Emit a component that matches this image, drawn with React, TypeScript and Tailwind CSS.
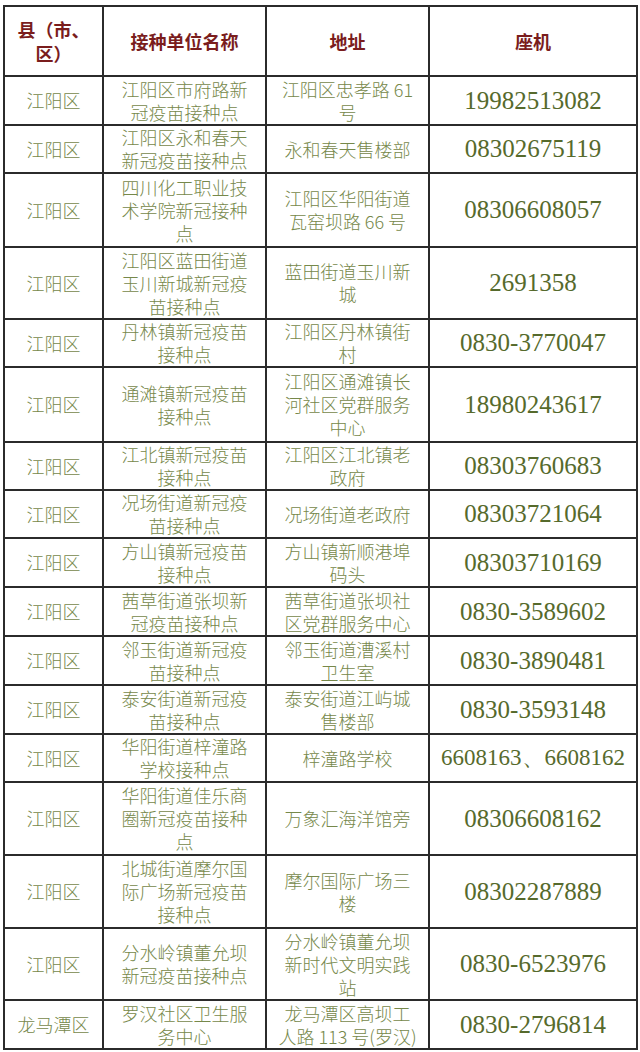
import React from 'react'

type Row = {
  h: string
  county: string
  site: string[]
  address: string[]
  phone: string
}

const ROWS: Row[] = [
  { h: 'h-[49px]', county: '江阳区', site: ['江阳区市府路新', '冠疫苗接种点'], address: ['江阳区忠孝路 61', '号'], phone: '19982513082' },
  { h: 'h-[48px]', county: '江阳区', site: ['江阳区永和春天', '新冠疫苗接种点'], address: ['永和春天售楼部'], phone: '08302675119' },
  { h: 'h-[74px]', county: '江阳区', site: ['四川化工职业技', '术学院新冠接种', '点'], address: ['江阳区华阳街道', '瓦窑坝路 66 号'], phone: '08306608057' },
  { h: 'h-[72px]', county: '江阳区', site: ['江阳区蓝田街道', '玉川新城新冠疫', '苗接种点'], address: ['蓝田街道玉川新', '城'], phone: '2691358' },
  { h: 'h-[48px]', county: '江阳区', site: ['丹林镇新冠疫苗', '接种点'], address: ['江阳区丹林镇街', '村'], phone: '0830-3770047' },
  { h: 'h-[75px]', county: '江阳区', site: ['通滩镇新冠疫苗', '接种点'], address: ['江阳区通滩镇长', '河社区党群服务', '中心'], phone: '18980243617' },
  { h: 'h-[47px]', county: '江阳区', site: ['江北镇新冠疫苗', '接种点'], address: ['江阳区江北镇老', '政府'], phone: '08303760683' },
  { h: 'h-[47px]', county: '江阳区', site: ['况场街道新冠疫', '苗接种点'], address: ['况场街道老政府'], phone: '08303721064' },
  { h: 'h-[49px]', county: '江阳区', site: ['方山镇新冠疫苗', '接种点'], address: ['方山镇新顺港埠', '码头'], phone: '08303710169' },
  { h: 'h-[49px]', county: '江阳区', site: ['茜草街道张坝新', '冠疫苗接种点'], address: ['茜草街道张坝社', '区党群服务中心'], phone: '0830-3589602' },
  { h: 'h-[49px]', county: '江阳区', site: ['邻玉街道新冠疫', '苗接种点'], address: ['邻玉街道漕溪村', '卫生室'], phone: '0830-3890481' },
  { h: 'h-[49px]', county: '江阳区', site: ['泰安街道新冠疫', '苗接种点'], address: ['泰安街道江屿城', '售楼部'], phone: '0830-3593148' },
  { h: 'h-[48px]', county: '江阳区', site: ['华阳街道梓潼路', '学校接种点'], address: ['梓潼路学校'], phone: '6608163、6608162' },
  { h: 'h-[73px]', county: '江阳区', site: ['华阳街道佳乐商', '圈新冠疫苗接种', '点'], address: ['万象汇海洋馆旁'], phone: '08306608162' },
  { h: 'h-[73px]', county: '江阳区', site: ['北城街道摩尔国', '际广场新冠疫苗', '接种点'], address: ['摩尔国际广场三', '楼'], phone: '08302287889' },
  { h: 'h-[72px]', county: '江阳区', site: ['分水岭镇董允坝', '新冠疫苗接种点'], address: ['分水岭镇董允坝', '新时代文明实践', '站'], phone: '0830-6523976' },
  { h: 'h-[49px]', county: '龙马潭区', site: ['罗汉社区卫生服', '务中心'], address: ['龙马潭区高坝工', '人路 113 号(罗汉)'], phone: '0830-2796814' },
]

export default function App() {
  const cell = 'border-2 border-[#2b2b2b] p-0 text-center align-middle'
  // wrapped cells keep the picture's own line breaks
  const text = 'text-[18px] leading-[23px] text-[#76884a] font-light whitespace-pre-line'
  const head = 'border-2 border-[#2b2b2b] p-0 text-center align-middle font-bold text-[#7a1d1d] text-[18px] leading-[24px] whitespace-pre-line'

  return (
    <div className="w-[640px] min-h-[1052px] bg-white pl-[3px] pt-[5px] font-['Noto_Sans_CJK_SC',sans-serif]">
      <table className="table-fixed border-collapse w-[633px]">
        <colgroup>
          <col className="w-[99px]" />
          <col className="w-[163px]" />
          <col className="w-[163px]" />
          <col className="w-[208px]" />
        </colgroup>
        <thead>
          <tr className="h-[70px]">
            <th className={head}>{'县（市、\n区）'}</th>
            <th className={head}>接种单位名称</th>
            <th className={head}>地址</th>
            <th className={head}>座机</th>
          </tr>
        </thead>
        <tbody>
          {ROWS.map((r, i) => (
            <tr key={i} className={r.h}>
              <td className={`${cell} ${text}`}>{r.county}</td>
              <td className={`${cell} ${text}`}>{r.site.join('\n')}</td>
              <td className={`${cell} ${text}`}>{r.address.join('\n')}</td>
              <td
                className={`${cell} font-['Liberation_Serif',serif] text-[#566a2c] ${
                  r.phone.length > 12 ? 'text-[23px]' : 'text-[25px]'
                } leading-[24px]`}
              >
                {r.phone}
              </td>
            </tr>
          ))}
        </tbody>
      </table>
    </div>
  )
}
